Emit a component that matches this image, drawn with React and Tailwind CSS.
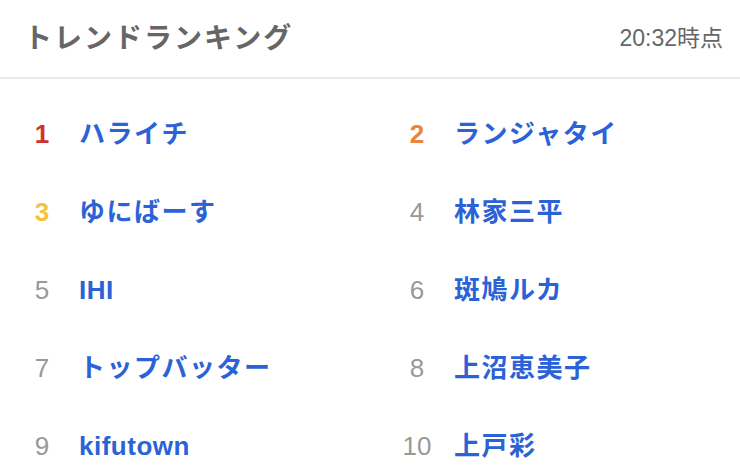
import React from 'react';

const items = [
  { rank: 1, name: 'ハライチ' },
  { rank: 2, name: 'ランジャタイ' },
  { rank: 3, name: 'ゆにばーす' },
  { rank: 4, name: '林家三平' },
  { rank: 5, name: 'IHI', latin: true },
  { rank: 6, name: '斑鳩ルカ' },
  { rank: 7, name: 'トップバッター' },
  { rank: 8, name: '上沼恵美子' },
  { rank: 9, name: 'kifutown', latin: true },
  { rank: 10, name: '上戸彩' },
];

const rankClass = (rank) => {
  if (rank === 1) return 'text-[#d0312d] font-bold';
  if (rank === 2) return 'text-[#e9853b] font-bold';
  if (rank === 3) return 'text-[#f1c43c] font-bold';
  return 'text-[#999999] font-normal';
};

const App = () => {
  return (
    <div
      className="w-[740px] h-[470px] bg-white overflow-hidden"
      style={{ fontFamily: '"Liberation Sans", "Noto Sans CJK JP", sans-serif' }}
    >
      <div className="h-[79px] flex items-center justify-between pl-[24px] pr-[17px] border-b-2 border-[#e8e8e8]">
        <h2 className="text-[28px] font-bold text-[#666666] tracking-[2px] leading-none">
          トレンドランキング
        </h2>
        <span className="text-[23px] text-[#666666] leading-none">20:32時点</span>
      </div>

      <div className="grid grid-cols-[375px_365px] pt-[16px]">
        {items.map((item) => (
          <div key={item.rank} className="h-[78px] flex items-center pl-[24px]">
            <span className={`w-[36px] text-center text-[26px] leading-none ${rankClass(item.rank)}`}>
              {item.rank}
            </span>
            <span
              className={`ml-[19px] text-[26px] font-bold text-[#2b63d6] leading-none ${
                item.latin ? 'tracking-[0.5px]' : 'tracking-[1.5px]'
              }`}
            >
              {item.name}
            </span>
          </div>
        ))}
      </div>
    </div>
  );
};

export default App;
